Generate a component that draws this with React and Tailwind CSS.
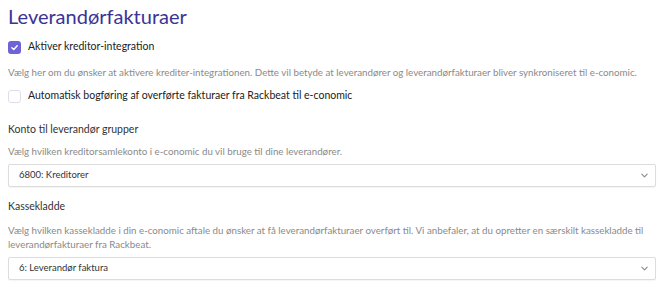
import React from "react";

function Chevron() {
  return (
    <svg width="9" height="9" viewBox="0 0 10 10" fill="none" stroke="#8a8a8a" strokeWidth="1.2" strokeLinecap="round" strokeLinejoin="round">
      <path d="M2 3.5 L5 6.5 L8 3.5" />
    </svg>
  );
}

function Select({ value }) {
  return (
    <div className="flex items-center justify-between h-[23px] border border-[#dcdcdc] rounded-[2px] bg-white pl-[10px] pr-[6px] text-[9.5px] text-[#333] shadow-[0_1px_1px_rgba(0,0,0,0.04)]">
      <span>{value}</span>
      <Chevron />
    </div>
  );
}

export default function App() {
  return (
    <div className="w-[670px] h-[288px] bg-white overflow-hidden pl-[8px] pr-[14px] text-[#222]" style={{ fontFamily: 'Lato, "Noto Sans", sans-serif' }}>
      <h1 className="text-[20px] leading-[26px] pt-[3px] text-[#3b3494]">Leverandørfakturaer</h1>
      <div className="flex items-center gap-[7px] mt-[11px] h-[14px]">
        <div className="w-[13px] h-[13px] rounded-[3px] bg-[#6f63d8] flex items-center justify-center">
          <svg width="9" height="9" viewBox="0 0 10 10" fill="none" stroke="white" strokeWidth="1.6" strokeLinecap="round" strokeLinejoin="round">
            <path d="M2 5.3 L4.2 7.3 L8 3" />
          </svg>
        </div>
        <span className="text-[10.5px]">Aktiver kreditor-integration</span>
      </div>
      <p className="text-[9.75px] text-[#8a8a8a] mt-[11px] leading-[14px] whitespace-nowrap">Vælg her om du ønsker at aktivere krediter-integrationen. Dette vil betyde at leverandører og leverandørfakturaer bliver synkroniseret til e-conomic.</p>
      <div className="flex items-center gap-[7px] mt-[10px] h-[14px]">
        <div className="w-[13px] h-[13px] rounded-[3px] border border-[#e0dde8] bg-white" />
        <span className="text-[10.5px]">Automatisk bogføring af overførte fakturaer fra Rackbeat til e-conomic</span>
      </div>
      <div className="text-[10.5px] text-[#333] mt-[18px] leading-[16px]">Konto til leverandør grupper</div>
      <p className="text-[9.75px] text-[#8a8a8a] mt-[7px] leading-[14px]">Vælg hvilken kreditorsamlekonto i e-conomic du vil bruge til dine leverandører.</p>
      <div className="mt-[6px]">
        <Select value="6800: Kreditorer" />
      </div>
      <div className="text-[10.5px] text-[#333] mt-[11px] leading-[16px]">Kassekladde</div>
      <p className="text-[9.75px] text-[#8a8a8a] mt-[9px] leading-[14px]">Vælg hvilken kassekladde i din e-conomic aftale du ønsker at få leverandørfakturaer overført til. Vi anbefaler, at du opretter en særskilt kassekladde til leverandørfakturaer fra Rackbeat.</p>
      <div className="mt-[6px]">
        <Select value="6: Leverandør faktura" />
      </div>
    </div>
  );
}
